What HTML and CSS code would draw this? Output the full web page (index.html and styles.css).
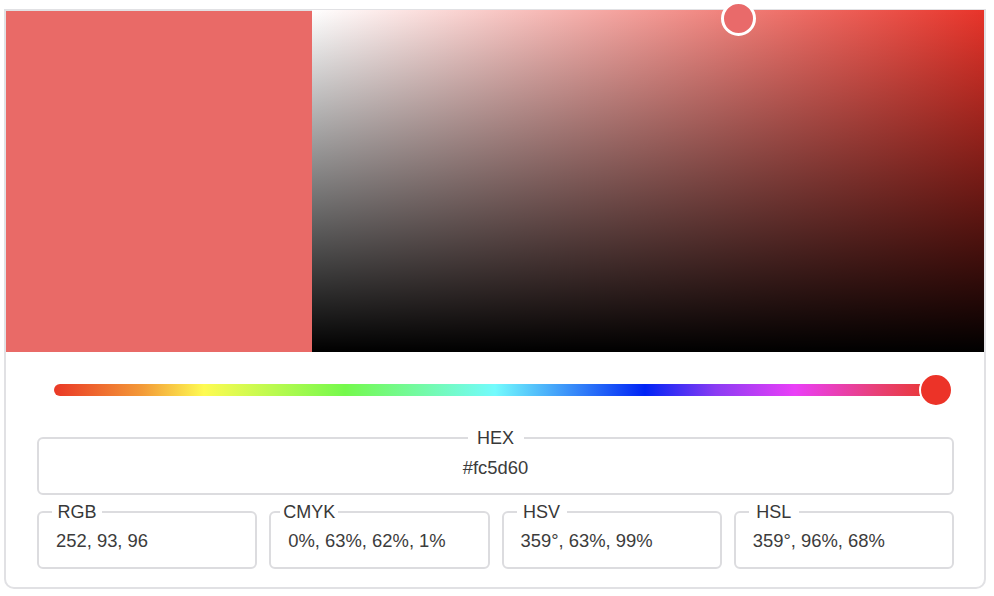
FILE: index.html
```html
<!DOCTYPE html>
<html lang="en">
<head>
<meta charset="utf-8">
<title>Color picker</title>
<link rel="stylesheet" href="styles.css">
</head>
<body>
<div class="card">
  <div class="picker">
    <div class="swatch"></div>
    <div class="saturation">
      <div class="sat-handle"></div>
    </div>
  </div>
  <div class="hue">
    <div class="hue-thumb"></div>
  </div>
  <div class="fields">
    <fieldset class="field field-hex">
      <legend class="legend legend-center"><span class="legend-text">HEX</span></legend>
      <div class="value">#fc5d60</div>
    </fieldset>
    <div class="field-row">
      <fieldset class="field field-small">
        <legend class="legend"><span class="legend-text">RGB</span></legend>
        <div class="value">252, 93, 96</div>
      </fieldset>
      <fieldset class="field field-small">
        <legend class="legend legend-wide"><span class="legend-text">CMYK</span></legend>
        <div class="value">0%, 63%, 62%, 1%</div>
      </fieldset>
      <fieldset class="field field-small">
        <legend class="legend"><span class="legend-text">HSV</span></legend>
        <div class="value">359°, 63%, 99%</div>
      </fieldset>
      <fieldset class="field field-small">
        <legend class="legend"><span class="legend-text">HSL</span></legend>
        <div class="value">359°, 96%, 68%</div>
      </fieldset>
    </div>
  </div>
</div>
</body>
</html>
```

FILE: styles.css
```css
* { box-sizing: border-box; }

html, body {
  margin: 0;
  padding: 0;
  background: #ffffff;
}

body {
  font-family: "Liberation Sans", Arial, sans-serif;
  color: #3a3a3a;
}

.card {
  margin: 9px 0 0 4px;
  width: 982px;
  border: 2px solid #e1e1e4;
  border-radius: 0 0 10px 10px;
  padding-bottom: 18px;
  background: #fff;
}

.picker {
  display: flex;
  height: 341px;
}

.swatch {
  width: 306px;
  background: #e96a67;
}

.saturation {
  flex: 1;
  position: relative;
  margin-top: -1px;
  background:
    linear-gradient(to bottom, rgba(0,0,0,0) 0%, #000 100%),
    linear-gradient(to right, #ffffff 0%, #e8342a 100%);
}

.sat-handle {
  position: absolute;
  left: 409px;
  top: -9px;
  width: 35px;
  height: 35px;
  border-radius: 50%;
  border: 3px solid #ffffff;
  background: #e96a6a;
}

.hue {
  position: relative;
  margin: 32px 48px 0 48px;
  height: 12px;
  border-radius: 6px;
  background: linear-gradient(to right,
    #ea3826 0%,
    #f39a38 10%,
    #fefb52 17%,
    #74f94c 33%,
    #73fbfd 50%,
    #0023f5 67%,
    #8b3cf3 75%,
    #ea3ff7 84%,
    #e8407a 93%,
    #e9372b 100%);
}

.hue-thumb {
  position: absolute;
  right: -17px;
  top: 50%;
  width: 34px;
  height: 34px;
  margin-top: -17px;
  border-radius: 50%;
  border: 2px solid #ffffff;
  background: #ec3328;
}

.fields {
  margin: 32px 30px 0 31px;
  display: flex;
  flex-direction: column;
  gap: 7px;
}

.field {
  margin: 0;
  padding: 0;
  border: 2px solid #dcdcdf;
  border-radius: 6px;
  min-width: 0;
}

.legend {
  font-size: 18px;
  line-height: 20px;
  color: #383838;
  padding: 0 3px;
  margin-left: 13px;
}

.legend-text {
  display: block;
  min-width: 44px;
  text-align: center;
}

.legend-wide {
  margin-left: 9px;
}

.legend-center {
  margin: 0 auto;
  padding: 0 6px;
}

.value {
  font-size: 18.4px;
  line-height: 20px;
  color: #3c3c3c;
  white-space: nowrap;
}

.field-hex .value {
  padding: 10px 0 15px;
  text-align: center;
}

.field-row {
  display: grid;
  grid-template-columns: repeat(4, 1fr);
  gap: 12px;
}

.field-small .value {
  padding: 9px 0 16px 17px;
}
```
